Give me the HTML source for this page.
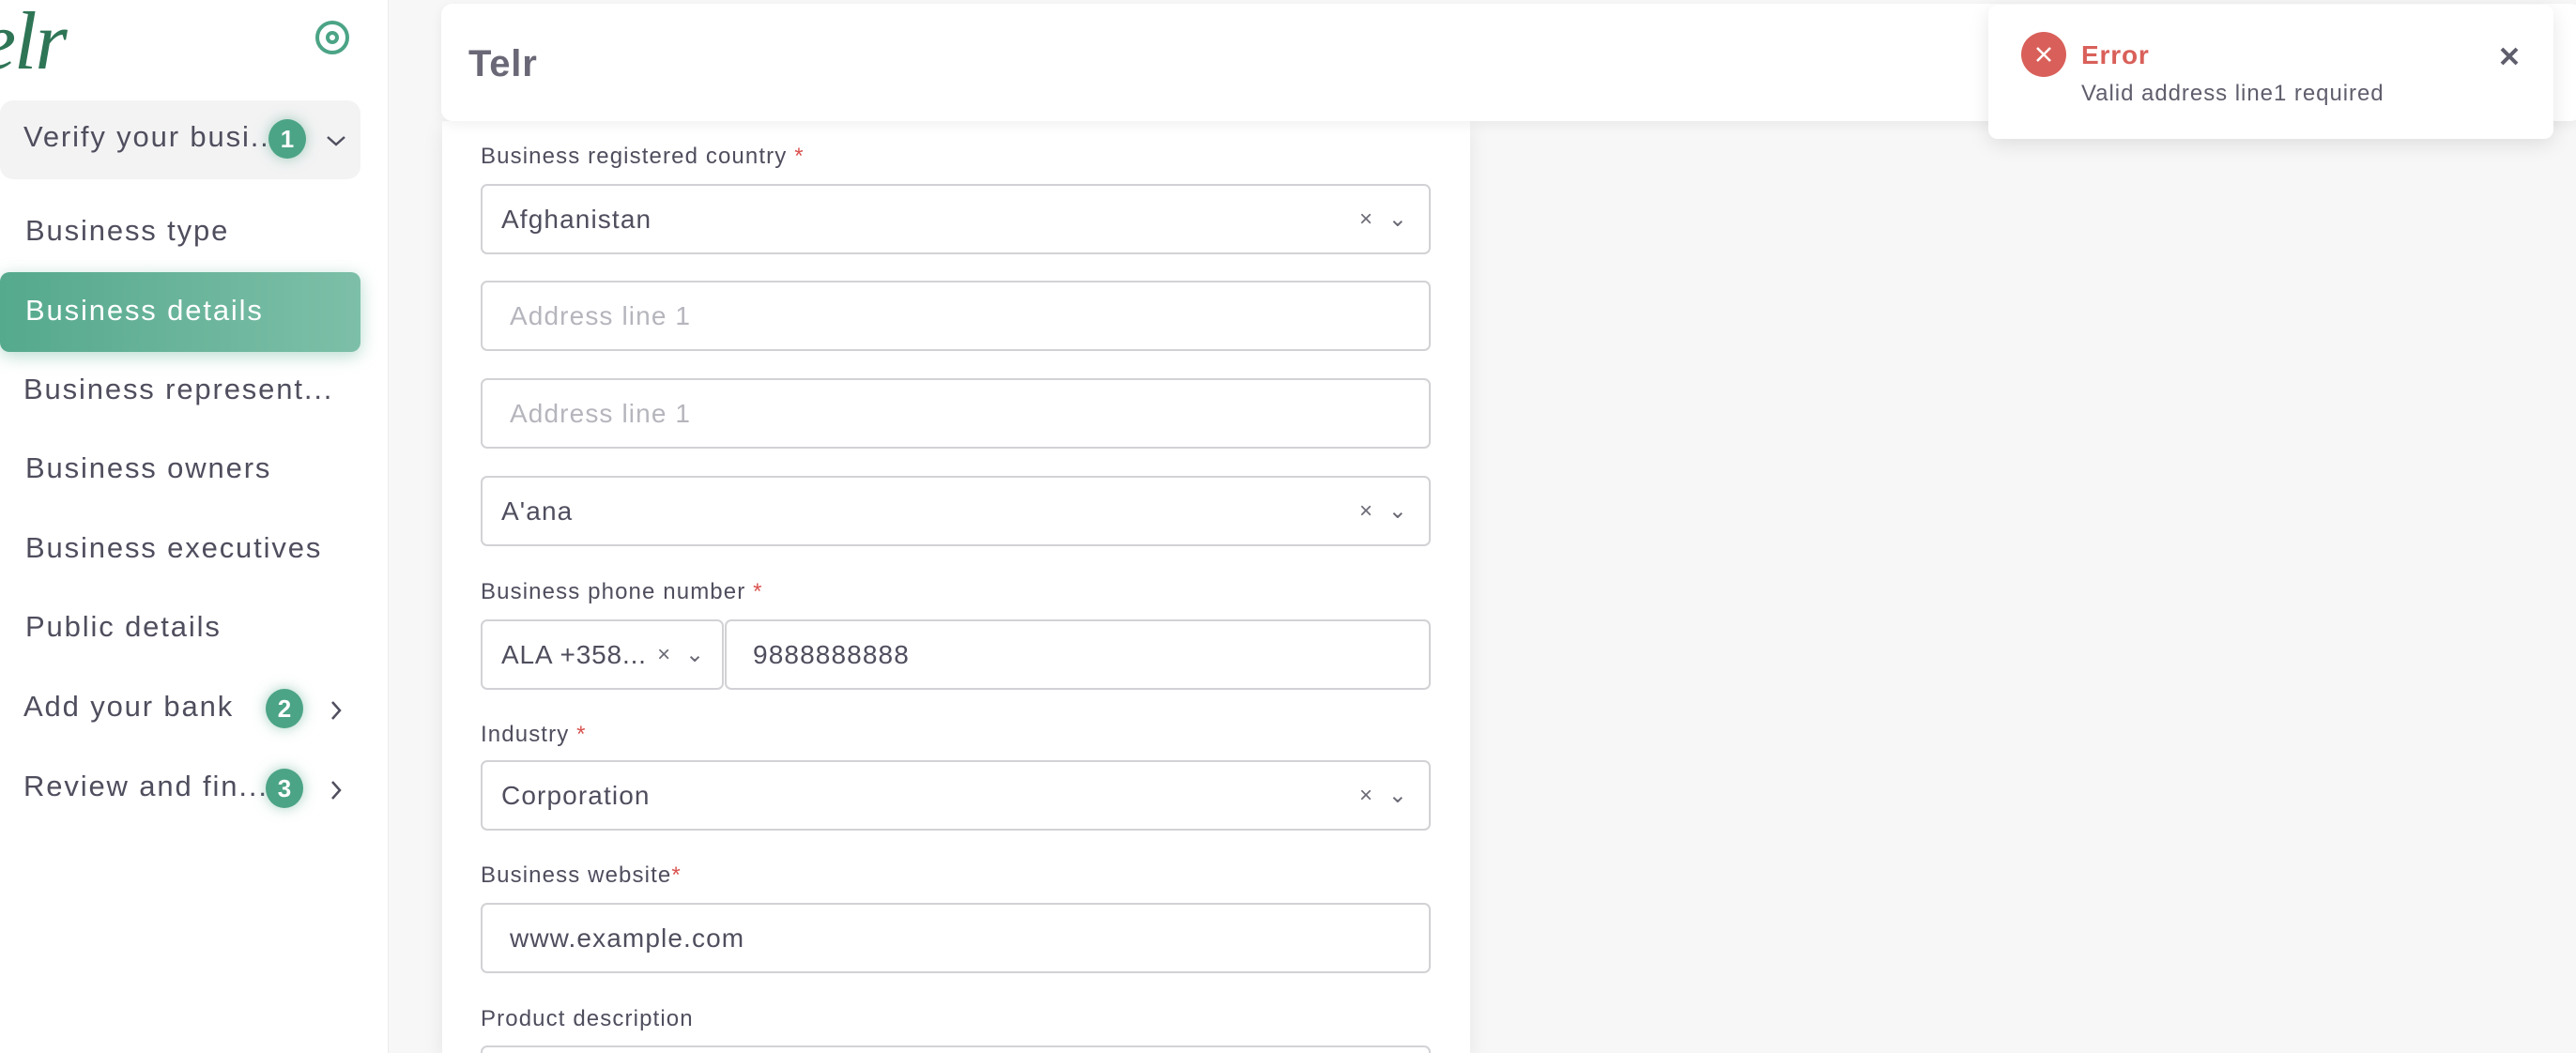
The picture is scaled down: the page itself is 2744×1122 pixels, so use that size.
<!DOCTYPE html>
<html style="width:2744px;height:1122px;overflow:hidden"><head><meta charset="utf-8"><style>
*{box-sizing:border-box;margin:0;padding:0}
body{width:2744px;height:1122px;overflow:hidden;background:#f7f7f7;font-family:"Liberation Sans",sans-serif;color:#4f4e5e;position:relative;letter-spacing:0.07em}
.side{position:absolute;left:0;top:0;width:414px;height:1122px;background:#fff;border-right:1px solid #ececec}
.logo{position:absolute;left:-22px;top:-6px;font-family:"Liberation Serif",serif;font-style:italic;font-size:88px;color:#2e7556;letter-spacing:-2px}
.target{position:absolute;left:336px;top:22px;width:36px;height:36px;border:4px solid #4ba485;border-radius:50%}
.target:after{content:"";position:absolute;left:7px;top:7px;width:14px;height:14px;border:4px solid #4ba485;border-radius:50%;box-sizing:border-box}
.verify{position:absolute;left:0;top:107px;width:384px;height:84px;background:#f3f3f4;border-radius:14px}
.item{position:absolute;left:27px;font-size:31px;color:#4f4e5e;white-space:nowrap;letter-spacing:0.06em}
.badge{position:absolute;width:40px;height:42px;border-radius:50%;background:#4ba485;color:#fff;font-weight:bold;font-size:26px;text-align:center;line-height:42px;box-shadow:0 0 14px rgba(75,164,133,.5);letter-spacing:0}
.active{position:absolute;left:0;top:290px;width:384px;height:85px;border-radius:10px;background:linear-gradient(90deg,#55a98d,#7dbfa8);box-shadow:0 4px 18px rgba(75,164,133,.4)}
.header{position:absolute;left:470px;top:4px;width:2280px;height:125px;background:#fff;border-radius:12px;box-shadow:0 4px 14px rgba(0,0,0,.06)}
.header span{position:absolute;left:29px;top:42px;font-size:40px;font-weight:bold;color:#6a6877;letter-spacing:0.02em}
.card{position:absolute;left:471px;top:129px;width:1095px;height:993px;background:#fff;box-shadow:0 6px 20px rgba(0,0,0,.08)}
.lbl{position:absolute;left:512px;font-size:24px;color:#4f4e5e}
.lbl b{color:#d9534f;font-weight:normal}
.fld{position:absolute;left:512px;width:1012px;height:75px;border:2px solid #d2d2d6;border-radius:7px;background:#fff;font-size:28px;color:#4f4e5e;padding-left:20px;line-height:71px;white-space:nowrap}
.ph{color:#b5b5bd;padding-left:29px}
.ic{position:absolute;right:22px;top:0;font-size:24px;color:#6b6b77}
.toast{position:absolute;left:2118px;top:5px;width:602px;height:143px;background:#fff;border-radius:10px;box-shadow:0 6px 22px rgba(0,0,0,.1)}
</style></head><body>
<div class="side">
<div class="logo">elr</div>
<div class="target"></div>
<div class="verify"></div>
<div class="item" style="top:128px;left:25px">Verify your busi...</div>
<div class="badge" style="left:286px;top:127px">1</div>
<svg style="position:absolute;left:347px;top:143px" width="22" height="14"><path d="M2 3 L11 11 L20 3" stroke="#4f4e5e" stroke-width="2.5" fill="none"/></svg>
<div class="item" style="top:228px">Business type</div>
<div class="active"></div>
<div class="item" style="top:313px;color:#fff">Business details</div>
<div class="item" style="top:397px;left:25px">Business represent...</div>
<div class="item" style="top:481px">Business owners</div>
<div class="item" style="top:566px">Business executives</div>
<div class="item" style="top:650px">Public details</div>
<div class="item" style="top:735px;left:25px">Add your bank</div>
<div class="badge" style="left:283px;top:734px">2</div>
<svg style="position:absolute;left:351px;top:745px" width="14" height="24"><path d="M3 3 L11 12 L3 21" stroke="#4f4e5e" stroke-width="2.5" fill="none"/></svg>
<div class="item" style="top:820px;left:25px">Review and fin...</div>
<div class="badge" style="left:283px;top:819px">3</div>
<svg style="position:absolute;left:351px;top:830px" width="14" height="24"><path d="M3 3 L11 12 L3 21" stroke="#4f4e5e" stroke-width="2.5" fill="none"/></svg>
</div>

<div class="card"></div>
<div class="header"><span>Telr</span></div>

<div class="lbl" style="top:153px">Business registered country <b>*</b></div>
<div class="fld" style="top:196px">Afghanistan<span class="ic">×&nbsp;&nbsp;⌄</span></div>
<div class="fld ph" style="top:299px">Address line 1</div>
<div class="fld ph" style="top:403px">Address line 1</div>
<div class="fld" style="top:507px">A'ana<span class="ic">×&nbsp;&nbsp;⌄</span></div>
<div class="lbl" style="top:617px">Business phone number <b>*</b></div>
<div class="fld" style="top:660px;width:259px;padding-left:20px;letter-spacing:0.03em">ALA +358...<span class="ic" style="right:18px">×&nbsp;&nbsp;⌄</span></div>
<div class="fld" style="top:660px;left:772px;width:752px;padding-left:28px">9888888888</div>
<div class="lbl" style="top:769px">Industry <b>*</b></div>
<div class="fld" style="top:810px">Corporation<span class="ic">×&nbsp;&nbsp;⌄</span></div>
<div class="lbl" style="top:919px">Business website<b>*</b></div>
<div class="fld" style="top:962px;padding-left:29px">www.example.com</div>
<div class="lbl" style="top:1072px">Product description</div>
<div class="fld" style="top:1114px;height:8px;border-bottom:none;border-radius:7px 7px 0 0"></div>

<div class="toast">
<div style="position:absolute;left:35px;top:29px;width:48px;height:48px;border-radius:50%;background:#d9605a"></div>
<svg style="position:absolute;left:49px;top:43px" width="20" height="20"><path d="M3 3 L17 17 M17 3 L3 17" stroke="#fff" stroke-width="2.5"/></svg>
<div style="position:absolute;left:99px;top:38px;font-size:28px;font-weight:bold;color:#d9605a;letter-spacing:0.03em">Error</div>
<div style="position:absolute;left:99px;top:81px;font-size:24px;color:#5f5e6c;letter-spacing:0.04em">Valid address line1 required</div>
<svg style="position:absolute;left:544px;top:44px" width="22" height="22"><path d="M3 3 L19 19 M19 3 L3 19" stroke="#5f5e6c" stroke-width="4"/></svg>
</div>
</body></html>
